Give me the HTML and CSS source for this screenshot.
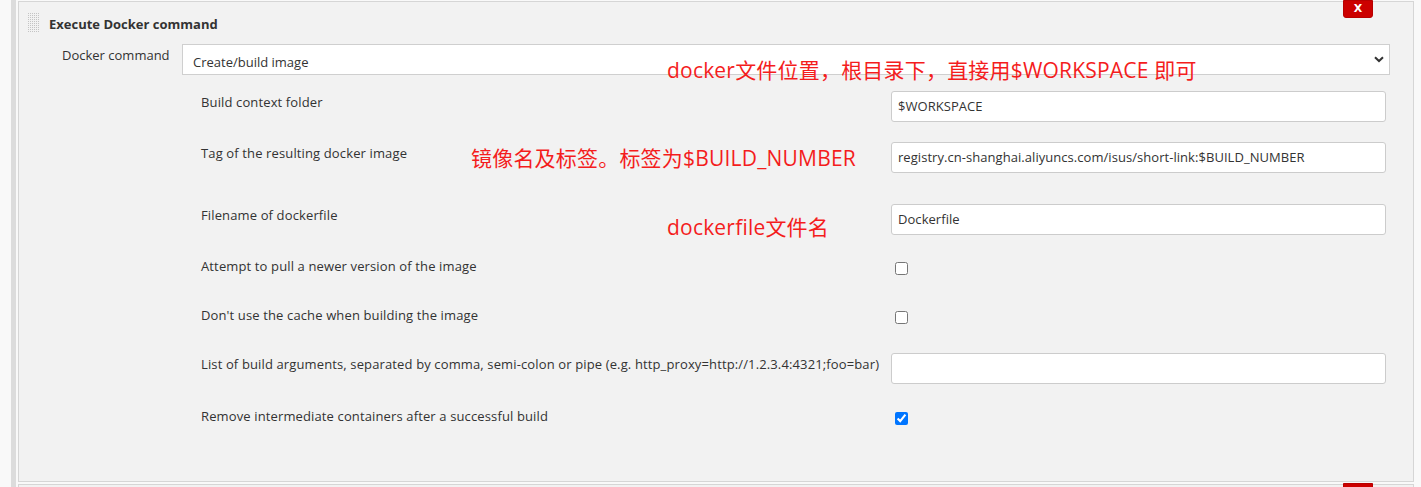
FILE: index.html
```html
<!DOCTYPE html>
<html lang="zh-CN">
<head>
<meta charset="utf-8">
<title>Execute Docker command</title>
<link rel="stylesheet" href="styles.css">
</head>
<body>
<div class="page">
  <div class="rail"></div>
  <div class="panels">
    <section class="panel">
      <div class="head">
        <span class="grip"></span>
        <span class="title">Execute Docker command</span>
      </div>
      <button class="del" type="button">X</button>

      <div class="cmd-row">
        <label class="cmd-label">Docker command</label>
        <div class="select">
          <span>Create/build image</span>
          <svg class="chev" width="10" height="7" viewBox="0 0 10 7"><path d="M1 1.2 L5 5 L9 1.2" fill="none" stroke="#333" stroke-width="2"/></svg>
        </div>
      </div>

      <div class="rows">
        <div class="row h51">
          <div class="lbl">Build context folder</div>
          <div class="input">$WORKSPACE</div>
        </div>
        <div class="row h62">
          <div class="lbl">Tag of the resulting docker image</div>
          <div class="input">registry.cn-shanghai.aliyuncs.com/isus/short-link:$BUILD_NUMBER</div>
        </div>
        <div class="row h52">
          <div class="lbl">Filename of dockerfile</div>
          <div class="input">Dockerfile</div>
        </div>
        <div class="row cb h49">
          <div class="lbl">Attempt to pull a newer version of the image</div>
          <div class="check"><input type="checkbox"></div>
        </div>
        <div class="row cb h48">
          <div class="lbl">Don't use the cache when building the image</div>
          <div class="check"><input type="checkbox"></div>
        </div>
        <div class="row h53">
          <div class="lbl">List of build arguments, separated by comma, semi-colon or pipe (e.g. http_proxy=http://1.2.3.4:4321;foo=bar)</div>
          <div class="input"></div>
        </div>
        <div class="row cb">
          <div class="lbl">Remove intermediate containers after a successful build</div>
          <div class="check"><input type="checkbox" checked></div>
        </div>
      </div>

      <div class="note note-1">docker文件位置，根目录下，直接用$WORKSPACE 即可</div>
      <div class="note note-2">镜像名及标签。标签为$BUILD_NUMBER</div>
      <div class="note note-3">dockerfile文件名</div>
    </section>
    <section class="panel next">
      <button class="del" type="button" aria-label="Delete"></button>
    </section>
  </div>
</div>
</body>
</html>
```

FILE: styles.css
```css
* { box-sizing: border-box; }
html, body { margin: 0; padding: 0; }
body {
  background: #f9f9f9;
  font-family: "Open Sans", "Noto Sans", sans-serif;
  font-size: 13px;
  color: #333;
  height: 487px;
  overflow: hidden;
}
.page {
  display: flex;
  padding-left: 11px;
  height: 487px;
}
.rail {
  width: 5px;
  background: #dcdcdc;
  margin-right: 2px;
  flex: none;
}
.panels {
  width: 1396px;
  height: 487px;
  padding-top: 1px;
  display: flex;
  flex-direction: column;
  gap: 2px;
  overflow: hidden;
}
.panel {
  position: relative;
  background: #f2f2f2;
  border: 1px solid #d6d6d6;
  height: 481px;
  flex: none;
}
.panel.next {
  flex: 1 1 auto;
  height: auto;
  min-height: 0;
  border-bottom: none;
}
.head {
  display: flex;
  align-items: flex-start;
  padding: 11px 0 0 9px;
  height: 31px;
}
.grip {
  width: 12px;
  height: 20px;
  background-color: #c4c4c4;
  background-image:
    linear-gradient(to right, transparent 1px, #f2f2f2 1px),
    linear-gradient(to bottom, transparent 1px, #f2f2f2 1px);
  background-size: 2px 2px;
}
.title {
  margin-left: 9px;
  margin-top: 1px;
  font-weight: bold;
  line-height: 20px;
  color: #333;
}
.del {
  position: absolute;
  top: -2px;
  right: 40px;
  width: 30px;
  height: 18px;
  padding: 0;
  border: 1px solid #b80000;
  border-radius: 0 0 3px 3px;
  background: #cc0000;
  color: #fff;
  font-family: "DejaVu Sans", sans-serif;
  font-weight: bold;
  font-size: 11px;
  line-height: 16px;
}
.cmd-row {
  display: flex;
  margin-top: 11px;
  padding-left: 43px;
  height: 31px;
}
.cmd-label {
  width: 120px;
  flex: none;
  line-height: 20px;
  padding-top: 1px;
}
.select {
  position: relative;
  width: 1208px;
  height: 31px;
  background: #fff;
  border: 1px solid #cfcfcf;
  padding: 8px 0 0 10px;
  line-height: 18px;
  overflow: hidden;
}
.chev {
  position: absolute;
  right: 5px;
  top: 11px;
}
.rows {
  margin-top: 16px;
  padding-left: 182px;
}
.row {
  display: grid;
  grid-template-columns: 690px 495px;
  align-items: start;
}
.h48 { height: 48px; }
.h49 { height: 49px; }
.h51 { height: 51px; }
.h52 { height: 52px; }
.h53 { height: 53px; }
.h62 { height: 62px; }
.lbl {
  line-height: 20px;
  padding-top: 1px;
  white-space: nowrap;
  letter-spacing: 0.13px;
}
.row.cb .lbl { padding-top: 0; }
.input {
  height: 31px;
  background: #fff;
  border: 1px solid #ccc;
  border-radius: 3px;
  padding-left: 6px;
  line-height: 29px;
  white-space: nowrap;
  overflow: hidden;
  letter-spacing: 0.05px;
}
.check { padding-top: 3px; }
.check input {
  width: 13px;
  height: 13px;
  margin: 3px 0 0 4px;
  display: block;
}
.note {
  position: absolute;
  color: #f41d1d;
  font-family: "Open Sans", "Noto Sans CJK SC", sans-serif;
  font-size: 21px;
  line-height: 26px;
  white-space: nowrap;
  letter-spacing: 0.2px;
}
.note-1 { left: 648px; top: 55px; }
.note-2 { left: 452px; top: 143px; }
.note-3 { left: 648px; top: 212px; }
```
